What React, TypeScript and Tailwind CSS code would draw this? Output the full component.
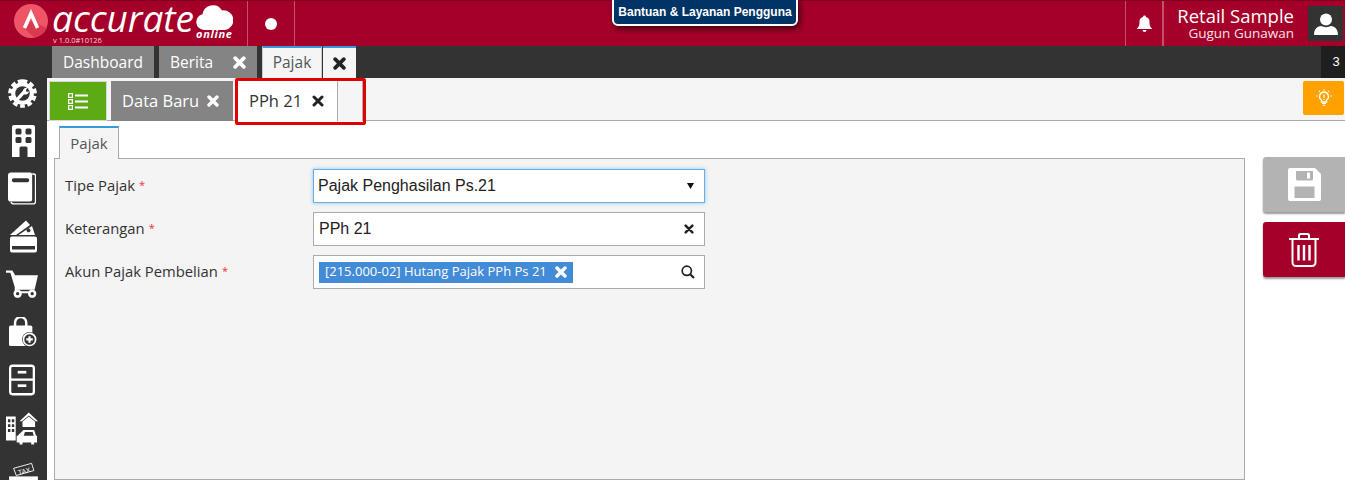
import React from "react";

const X = ({ s = 12, c = "#fff", w = 3.4 }: { s?: number; c?: string; w?: number }) => (
  <svg width={s} height={s} viewBox="0 0 12 12" className="shrink-0">
    <path d="M2 2 L10 10 M10 2 L2 10" stroke={c} strokeWidth={w} strokeLinecap="round" />
  </svg>
);

const Gear = () => (
  <svg width="29" height="29" viewBox="0 0 32 32">
    <path fill="none" stroke="#fff" strokeWidth="4" strokeDasharray="5.200 2.900" d="M16 2.200a13.800 13.800 0 1 1 0 27.600a13.800 13.800 0 1 1 0-27.600z" />
    <circle cx="16" cy="16" r="12.500" fill="#fff" />
    <circle cx="16" cy="16" r="8" fill="#333" />
    <path d="M11.500 21 L18.500 13.500" stroke="#fff" strokeWidth="3.600" strokeLinecap="round" />
    <path d="M16.500 12.500a4 4 0 0 1 5-2.500l-2.400 2.600 1.200 1.800 2.800-1a4 4 0 0 1-5.500 3.500z" fill="#fff" />
  </svg>
);
const Building = () => (
  <svg width="23" height="32" viewBox="0 0 23 32">
    <path fill="#fff" fillRule="evenodd" d="M2 0h19a2 2 0 0 1 2 2v30h-7.500v-9a1.500 1.500 0 0 0-1.500-1.500H9a1.500 1.500 0 0 0-1.500 1.500v9H0V2a2 2 0 0 1 2-2zM5 3.500a1.500 1.500 0 0 0-1.500 1.500v3A1.500 1.500 0 0 0 5 9.500h3A1.500 1.500 0 0 0 9.500 8V5A1.500 1.500 0 0 0 8 3.500zM15 3.500A1.500 1.500 0 0 0 13.500 5v3A1.500 1.500 0 0 0 15 9.500h3A1.500 1.500 0 0 0 19.500 8V5A1.500 1.500 0 0 0 18 3.500zM5 12a1.500 1.500 0 0 0-1.500 1.500v3A1.500 1.500 0 0 0 5 18h3a1.500 1.500 0 0 0 1.500-1.500v-3A1.500 1.500 0 0 0 8 12zM15 12a1.500 1.500 0 0 0-1.500 1.500v3A1.500 1.500 0 0 0 15 18h3a1.500 1.500 0 0 0 1.500-1.500v-3A1.500 1.500 0 0 0 18 12z" />
  </svg>
);
const Book = () => (
  <svg width="28" height="33" viewBox="0 0 29 33">
    <path fill="none" stroke="#fff" strokeWidth="1.400" d="M25 1.500h1.500a2 2 0 0 1 2 2V30a2.500 2.500 0 0 1-2.500 2.500H6a3 3 0 0 1-3-2" />
    <path fill="#fff" fillRule="evenodd" d="M3 0h20a2 2 0 0 1 2 2v26a2 2 0 0 1-2 2H3a3 3 0 0 1-3-3V3a3 3 0 0 1 3-3zM6 6a1.500 1.500 0 0 0 0 4h14a1.500 1.500 0 0 0 0-4z" />
  </svg>
);
const Wallet = () => (
  <svg width="27" height="33" viewBox="0 0 27 32">
    <path fill="#fff" d="M0 14.500L16 0l4 4.500L6 14.500z" />
    <path fill="#fff" d="M8.500 14.500L22 5.500l3 9z" />
    <path fill="#333" d="M17 8.500a2 2 0 1 0 3.500 1.500a2 2 0 0 0-3.500-1.500z" />
    <path fill="#fff" fillRule="evenodd" d="M2 16h23a2 2 0 0 1 2 2v12a2 2 0 0 1-2 2H2a2 2 0 0 1-2-2V18a2 2 0 0 1 2-2zM2 25.500v3.500h23v-3.500z" />
  </svg>
);
const Cart = () => (
  <svg width="32" height="28" viewBox="0 0 33 28">
    <path fill="#fff" d="M0 0h6.500l3 5H33l-3.500 15H11v1.500h17v2H9V17L4.500 2.500H0z" />
    <circle cx="12" cy="24" r="3" fill="#333" stroke="#fff" strokeWidth="2.600" />
    <circle cx="27" cy="24" r="3" fill="#333" stroke="#fff" strokeWidth="2.600" />
  </svg>
);
const Bag = () => (
  <svg width="28" height="30" viewBox="0 0 30 32">
    <path fill="none" stroke="#fff" strokeWidth="2.600" d="M6.500 10V6a6 6 0 0 1 12 0v4" />
    <path fill="#fff" d="M2 9h21a2 2 0 0 1 2 2v18a2 2 0 0 1-2 2H2a2 2 0 0 1-2-2V11a2 2 0 0 1 2-2z" />
    <circle cx="22" cy="24" r="8" fill="#333" />
    <circle cx="22" cy="24" r="6.500" fill="#333" stroke="#fff" strokeWidth="1.800" />
    <path d="M18.500 24h7M22 20.500v7" stroke="#fff" strokeWidth="2.400" />
  </svg>
);
const Cabinet = () => (
  <svg width="26" height="32" viewBox="0 0 27 32">
    <rect x="1.200" y="1.200" width="24.600" height="29.600" rx="2.500" fill="none" stroke="#fff" strokeWidth="2.400" />
    <path d="M1 15.600h25" stroke="#fff" strokeWidth="2.400" />
    <rect x="9" y="6.500" width="9" height="2.800" fill="#fff" />
    <rect x="9" y="20.500" width="9" height="2.800" fill="#fff" />
  </svg>
);
const City = () => (
  <svg width="32" height="33" viewBox="0 0 33 33">
    <path fill="#fff" fillRule="evenodd" d="M0 4h10v25H0zM2 7v3h2.500V7zM6 7v3h2.500V7zM2 12v3h2.500v-3zM6 12v3h2.500v-3zM2 17v3h2.500v-3zM6 17v3h2.500v-3z" />
    <path fill="#fff" d="M23.500 0L33 9h-2.500L23.500 3 16.500 9H14z" />
    <path fill="#fff" d="M17 9.500L23.500 4l6.500 5.500V15H17z" />
    <path fill="#fff" fillRule="evenodd" d="M18 18h11l2 6h1v7h-3v2h-3v-2h-9v2h-3v-2h-3v-7h1zM19.500 20l-1.200 4h10.400l-1.200-4z" />
  </svg>
);
const Tax = () => (
  <svg width="29" height="18" viewBox="0 0 32 20">
    <path d="M5 7L25 1.500l2.500 8L8 15z" fill="#333" stroke="#fff" strokeWidth="1" />
    <text x="9.500" y="13" fontSize="7.500" fill="#fff" fontFamily="'Liberation Sans',sans-serif" transform="rotate(-15 16 9)">TAX</text>
    <rect x="0" y="16" width="32" height="4" fill="#fff" />
  </svg>
);

function Tab({ children, w, className = "" }: { children: React.ReactNode; w: string; className?: string }) {
  return (
    <div className={`h-8 flex items-center bg-[#848484] text-white text-[15.500px] pt-px ${w} ${className}`}>{children}</div>
  );
}

function Field({ label, children, mb = "" }: { label: string; children: React.ReactNode; mb?: string }) {
  return (
    <div className={`flex items-center h-[34px] ${mb}`}>
      <div className="w-[248px] text-[14.800px] text-[#333] flex items-center gap-[4px] pb-px">
        {label} <span className="text-[#e8323c] text-[11px]">*</span>
      </div>
      {children}
    </div>
  );
}

export default function App() {
  return (
    <div className="w-[1345px] h-[480px] overflow-hidden bg-white relative" style={{ fontFamily: "'Open Sans','Noto Sans',sans-serif" }}>
      {/* Header */}
      <div className="h-[46px] bg-[#a50029] border-t border-[#7d0020] flex items-stretch text-white">
        <div className="w-[247px] flex pl-[14px] relative">
          <svg width="34" height="34" viewBox="0 0 34 34" className="mt-[3px] shrink-0">
            <circle cx="17" cy="17" r="17" fill="#ee5566" />
            <path d="M17 17 L33 24 A17 17 0 0 1 20 33.500 L11 25z" fill="#d83a50" />
            <path d="M10.500 24 L17 9.500 L23.500 24" fill="none" stroke="#fff" strokeWidth="3.600" />
          </svg>
          <span className="italic text-[37px] leading-[33px] h-[33px] ml-[4px] font-medium whitespace-nowrap" style={{ fontFamily: "'Open Sans',sans-serif" }}>accurate</span>
          <svg width="37" height="27" viewBox="0 0 37 27" className="absolute left-[196px] top-[3px]">
            <path fill="#fff" d="M8 26a8 8 0 0 1-1.500-15.800A10.500 10.500 0 0 1 26 6.500a9.800 9.800 0 0 1 3 19.500z" />
          </svg>
          <span className="absolute left-[196px] top-[26px] text-[11px] leading-[14px] font-bold italic tracking-[0.7px]">online</span>
          <span className="absolute left-[53px] top-[34px] text-[7.500px] leading-[10px] text-[#f4d5dc]">v 1.0.0#10126</span>
        </div>
        <div className="w-[48px] border-l border-r border-[#c2526c] flex items-center justify-center">
          <span className="w-3 h-3 rounded-full bg-white" />
        </div>
        <div className="flex-1" />
        <div className="w-[37px] border-l border-[#c2526c] flex items-center justify-center">
          <svg width="17" height="17" viewBox="0 0 17 17">
            <path fill="#fff" d="M8.500 0.500a1.500 1.500 0 0 1 1.500 1.400A5 5 0 0 1 13.500 7c0 4 1 5 2.500 6.500v.5H1v-.5C2.500 12 3.500 11 3.500 7A5 5 0 0 1 7 1.900A1.500 1.500 0 0 1 8.500.5z" />
            <path fill="#fff" d="M6.500 15h4a2 2 0 0 1-4 0z" />
          </svg>
        </div>
        <div className="w-[146px] border-l-2 border-[#c2526c] flex flex-col items-end pr-[14px] pt-[4px] whitespace-nowrap">
          <div className="text-[18.500px] leading-[22px]">Retail Sample</div>
          <div className="text-[13.500px] leading-[12px] text-[#f7e3e7]">Gugun Gunawan</div>
        </div>
        <div className="w-[35px] h-[35px] bg-[#333] self-start mt-[5px] mr-[2px] flex items-center justify-center">
          <svg width="24" height="22" viewBox="0 0 24 22">
            <circle cx="12" cy="6.500" r="6" fill="#fff" />
            <path fill="#fff" d="M0 22c0-6 3-8.500 7-9 3 1.500 7 1.500 10 0 4 .5 7 3 7 9z" />
          </svg>
        </div>
      </div>
      {/* Help pill */}
      <div className="absolute left-[612px] -top-[2px] h-[28px] w-[186px] bg-[#003366] border-2 border-white rounded-b-[6px] shadow-[2px_3px_6px_rgba(0,0,0,0.6)] flex items-center justify-center text-white text-[12px] font-bold" style={{ fontFamily: "'Liberation Sans',sans-serif" }}>
        Bantuan &amp; Layanan Pengguna
      </div>

      {/* Tab bar */}
      <div className="h-8 bg-[#333] flex pl-[52px]">
        <Tab w="w-[102px]" className="pl-[11px] mr-[5px]">Dashboard</Tab>
        <Tab w="w-[98px]" className="pl-[11px] justify-between pr-[11px] mr-[5px]">
          Berita <X s={13} />
        </Tab>
        <div className="w-[60px] h-8 bg-[#f5f5f5] border-t-2 border-[#3a9ad9] border-x border-x-[#ccc] flex items-center justify-center text-[15.500px] text-[#555]">Pajak</div>
        <div className="w-[33px] h-8 bg-[#f5f5f5] border-t-2 border-[#3a9ad9] ml-px flex items-center justify-center">
          <X s={13} c="#222" />
        </div>
        <div className="flex-1" />
        <div className="w-[24px] bg-[#1f1f1f] text-white text-[13px] flex items-center justify-center pl-[6px]" style={{ fontFamily: "'Liberation Sans',sans-serif" }}>3</div>
      </div>

      <div className="flex h-[402px]">
        {/* Sidebar */}
        <div className="w-[47px] bg-[#333] shrink-0 flex flex-col items-center relative overflow-hidden">
          <div className="h-[29px] mt-[1px] -ml-[2px]"><Gear /></div>
          <div className="mt-[17px] h-[32px]"><Building /></div>
          <div className="mt-[15px] h-[33px] -ml-[3px]"><Book /></div>
          <div className="mt-[15px] h-[33px]"><Wallet /></div>
          <div className="mt-[17px] h-[28px] -ml-[3px]"><Cart /></div>
          <div className="mt-[19px] h-[30px] -ml-[1px]"><Bag /></div>
          <div className="mt-[17px] h-[32px] -ml-[3px]"><Cabinet /></div>
          <div className="mt-[16px] h-[33px] -ml-[3px]"><City /></div>
          <div className="mt-[17px] h-[18px]"><Tax /></div>
        </div>

        <div className="flex-1 min-w-0 flex flex-col">
          {/* Sub tabs */}
          <div className="h-[43px] bg-[#f5f5f5] border-b border-[#aaa] flex items-start shrink-0 relative">
            <div className="ml-[2px] mt-[3px] w-[58px] h-[40px] bg-[#5dab14] border border-[#d8d8d8] flex items-center justify-center">
              <svg width="20" height="17" viewBox="0 0 20 17">
                <g fill="none" stroke="#fff" strokeWidth="1.200">
                  <rect x="0.600" y="0.600" width="3.800" height="3.800" />
                  <rect x="0.600" y="6.600" width="3.800" height="3.800" />
                  <rect x="0.600" y="12.600" width="3.800" height="3.800" />
                </g>
                <path d="M7 2.500h13M7 8.500h13M7 14.500h13" stroke="#fff" strokeWidth="2" />
              </svg>
            </div>
            <div className="ml-[4px] mt-[3px] w-[122px] h-[40px] bg-[#848484] text-white text-[16.500px] flex items-center pl-[11px] gap-[8px]">
              Data Baru <X s={12} />
            </div>
            <div className="ml-[3px] w-[101px] h-[44px] bg-white text-[#333] text-[16.500px] flex items-center pl-[13px] gap-[10px] pt-[2px] relative z-10">
              PPh 21 <X s={12} c="#222" w={3} />
            </div>
            <div className="w-[26px] h-[43px] bg-[#f5f5f5] border-l border-[#aaa] border-r relative z-10" />
            <div className="absolute left-[188px] top-0 w-[131px] h-[47px] border-[3px] border-[#e00000] rounded-[2px] z-20" />
            <div className="ml-auto mr-[1px] mt-[3px] w-[41px] h-[34px] bg-[#ffa200] rounded-[2px] flex items-center justify-center">
              <svg width="16" height="18" viewBox="0 0 16 18">
                <path d="M8 3a4.500 4.500 0 0 0-2.500 8.200V13h5v-1.800A4.500 4.500 0 0 0 8 3z" fill="none" stroke="#fff" strokeWidth="1.300" />
                <path d="M6 14.500h4M6.800 16.300h2.400M8 5.500v3.500M8 10v1M8 0v1.500M1.500 7H0M16 7h-1.500M2.800 2L3.800 3M13.200 2l-1 1" stroke="#fff" strokeWidth="1.100" />
              </svg>
            </div>
          </div>

          {/* Body */}
          <div className="flex-1 flex min-h-0 bg-white">
            <div className="w-[1191px] ml-[7px] flex flex-col">
              <div className="ml-[5px] mt-[5px] w-[60px] h-[33px] bg-[#f5f5f5] border-t-2 border-[#3a9ad9] border-x border-x-[#aaa] flex items-center justify-center text-[15px] text-[#555] relative z-10 -mb-px">Pajak</div>
              <div className="flex-1 bg-[#f4f4f4] border border-[#aaa] pl-[10px] pt-[10px]">
                <Field label="Tipe Pajak" mb="mb-[9px]">
                  <div className="w-[392px] h-[34px] bg-white border border-[#66afe9] shadow-[0_0_4px_rgba(102,175,233,0.7)] flex items-center pl-[4px] pr-[10px] justify-between text-[16px] text-[#222]" style={{ fontFamily: "'Liberation Sans',sans-serif" }}>
                    Pajak Penghasilan Ps.21
                    <svg width="7" height="6" viewBox="0 0 7 6"><path d="M0 0h7L3.500 6z" fill="#111" /></svg>
                  </div>
                </Field>
                <Field label="Keterangan" mb="mb-[9px]">
                  <div className="w-[392px] h-[34px] bg-white border border-[#aaa] flex items-center pl-[5px] pr-[10px] justify-between text-[16px] text-[#222]" style={{ fontFamily: "'Liberation Sans',sans-serif" }}>
                    PPh 21
                    <X s={10} c="#222" w={3} />
                  </div>
                </Field>
                <Field label="Akun Pajak Pembelian">
                  <div className="w-[392px] h-[34px] bg-white border border-[#aaa] flex items-center pl-[5px] pr-[9px] justify-between">
                    <div className="h-[21px] w-[254px] bg-[#428bd6] text-white text-[13px] flex items-center pl-[6px] gap-[8px] whitespace-nowrap">
                      [215.000-02] Hutang Pajak PPh Ps 21 <X s={12} />
                    </div>
                    <svg width="14" height="14" viewBox="0 0 14 14">
                      <circle cx="5.800" cy="5.800" r="4.600" fill="none" stroke="#222" strokeWidth="1.700" />
                      <path d="M9.200 9.200L13 13" stroke="#222" strokeWidth="2.200" />
                    </svg>
                  </div>
                </Field>
              </div>
            </div>
            <div className="ml-[18px] flex-1 pt-[36px] flex flex-col gap-[10px]">
              <div className="h-[55px] bg-[#b3b3b3] rounded-l-[3px] shadow-[0_2px_2px_rgba(0,0,0,0.4)] flex items-center justify-center">
                <svg width="33" height="33" viewBox="0 0 33 33">
                  <path fill="#fff" fillRule="evenodd" d="M2 0h25l6 6v25a2 2 0 0 1-2 2H2a2 2 0 0 1-2-2V2a2 2 0 0 1 2-2zM8 3v8a1.500 1.500 0 0 0 1.500 1.500h14a1.500 1.500 0 0 0 1.500-1.500V3zM6.500 18.500v11.500h20V18.500z" />
                  <rect x="19" y="4.500" width="3" height="6" fill="#fff" />
                </svg>
              </div>
              <div className="h-[55px] bg-[#a50029] rounded-l-[3px] shadow-[0_2px_2px_rgba(0,0,0,0.4)] flex items-center justify-center">
                <svg width="32" height="34" viewBox="0 0 32 34">
                  <path d="M1 6h30M11 5.500V2.500a1.500 1.500 0 0 1 1.500-1.500h7a1.500 1.500 0 0 1 1.500 1.500v3" fill="none" stroke="#fff" strokeWidth="2" />
                  <path d="M4.500 7v22.500a3.500 3.500 0 0 0 3.500 3.500h16a3.500 3.500 0 0 0 3.500-3.500V7" fill="none" stroke="#fff" strokeWidth="2" />
                  <path d="M10.500 12v15.500M16 12v15.500M21.500 12v15.500" stroke="#fff" strokeWidth="2.400" />
                </svg>
              </div>
            </div>
          </div>
        </div>
      </div>
    </div>
  );
}
